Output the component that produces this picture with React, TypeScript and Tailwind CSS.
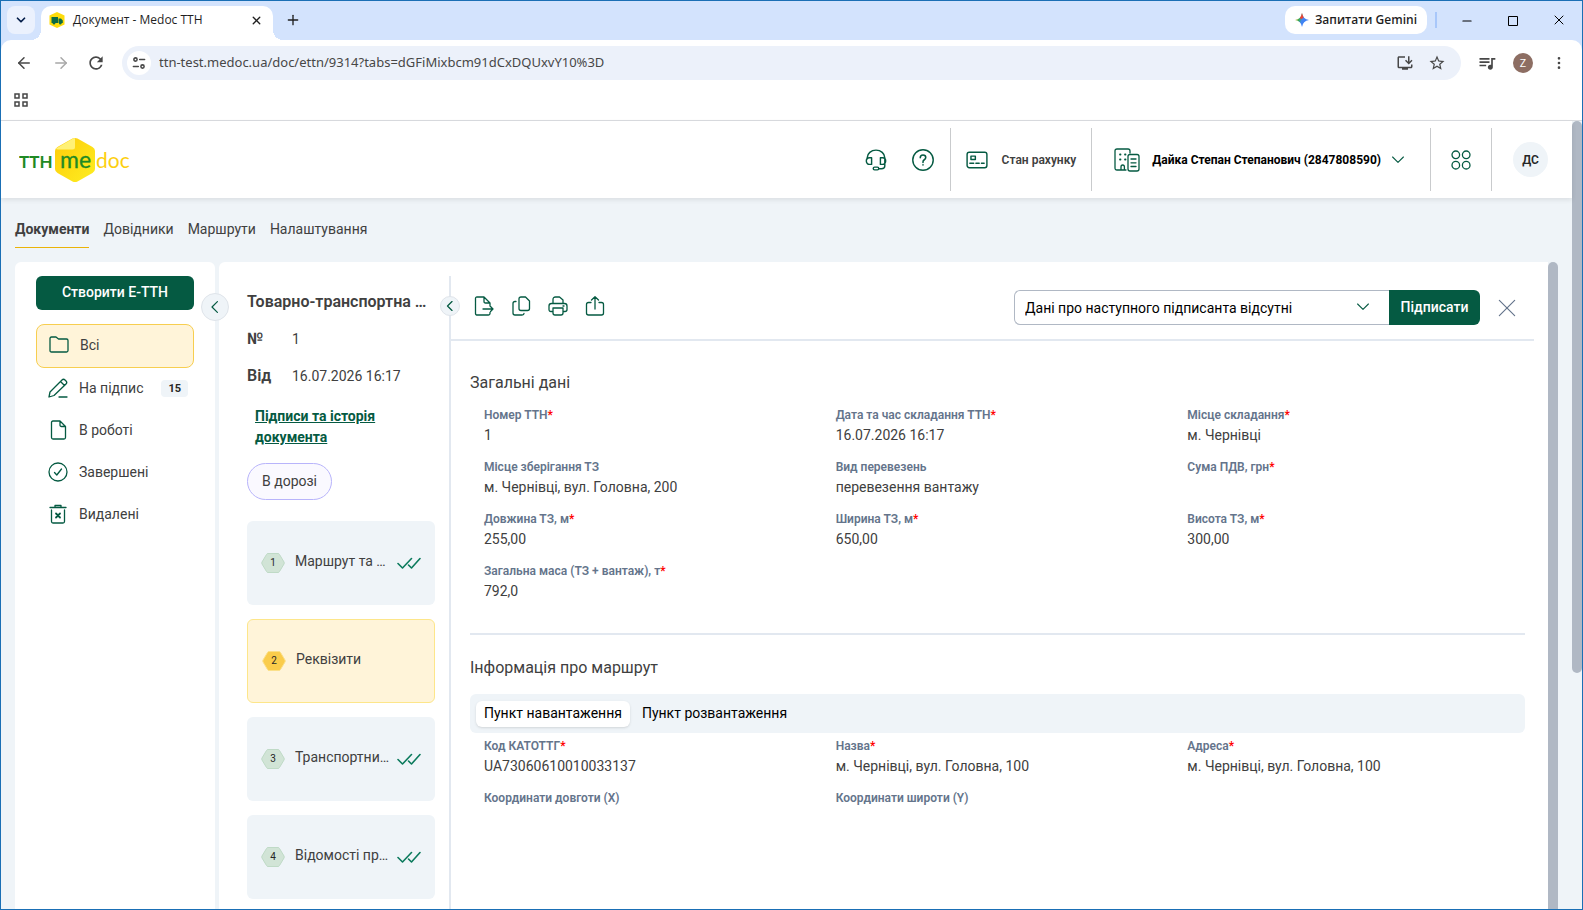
import clsx from "clsx";
import React from "react";
import {
  ArrowLeft,
  ArrowRight,
  ChevronDown,
  EllipsisVertical,
  Minus,
  Plus,
  Square,
  X,
} from "lucide-react";
import {
  MdOutlineInstallDesktop,
  MdQueueMusic,
  MdRefresh,
  MdStarBorder,
} from "react-icons/md";

type IconProps = { children: React.ReactNode; className?: string };

function Icon({ children, className = "size-5" }: IconProps) {
  return (
    <svg
      viewBox="0 0 20 20"
      fill="none"
      stroke="currentColor"
      strokeWidth="1.3"
      strokeLinecap="round"
      strokeLinejoin="round"
      aria-hidden="true"
      className={clsx("shrink-0", className)}
    >
      {children}
    </svg>
  );
}

function Favicon() {
  return (
    <svg viewBox="0 0 16 16" className="size-4 shrink-0" aria-hidden="true">
      <path d="M8 0l7.5 3.5v9L8 16 .5 12.500v-9z" fill="#fddc0c" />
      <path d="M2.500 5h6.500v6H2.500z" fill="#0b6b45" />
      <path d="M9.500 6.500H12l1.800 2V11H9.500z" fill="#0b6b45" />
      <circle cx="5" cy="11.300" r="1.200" fill="#0b6b45" />
      <circle cx="11.300" cy="11.300" r="1.200" fill="#0b6b45" />
    </svg>
  );
}

function Logo() {
  return (
    <svg viewBox="0 0 112 46" className="h-[46px] w-[112px]" role="img" aria-label="ТТН medoc">
      <defs>
        <linearGradient id="logo-hex" x1="0" y1="0" x2="1" y2="1">
          <stop offset="0" stopColor="#fecb0a" />
          <stop offset="1" stopColor="#fdee21" />
        </linearGradient>
      </defs>
      <path
        d="M53.500 1.500q2.500-1.200 5 0l15 8.500q2.500 1.500 2.500 4v18q0 2.500-2.500 4l-15 8.500q-2.500 1.200-5 0l-15-8.500q-2.500-1.500-2.500-4V14q0-2.500 2.500-4z"
        fill="url(#logo-hex)"
      />
      <path d="M37 11.500l17.500-10.300H56V10q0 2.500-2.500 2.500H39q-2 0-2-1z" fill="#fff176" />
      <text x="0" y="31" fontSize="17" fontWeight="700" fill="#1f8a24" className="font-['Lato',sans-serif]">
        ТТН
      </text>
      <text x="41" y="31" fontSize="23" fill="#1f8a24" stroke="#1f8a24" strokeWidth="0.3" className="font-['Lato',sans-serif]">
        me
      </text>
      <text x="77" y="31" fontSize="21" fill="#fdcf10" className="font-['Lato',sans-serif]">
        doc
      </text>
    </svg>
  );
}

function BrowserBar() {
  return (
    <div className="shrink-0 bg-[#d3e3fd] font-['Open_Sans',sans-serif] text-[#1f1f1f]">
      <div className="flex h-[39px] items-end pl-1.5">
        <button
          aria-label="Пошук вкладок"
          className="mb-1.5 flex size-7 items-center justify-center rounded-lg bg-[#ebf1fd] text-[#041e49]"
        >
          <ChevronDown size={14} strokeWidth={3} />
        </button>
        <div className="relative ml-1.5 flex h-[34px] w-[232px] items-start rounded-t-[10px] bg-white pr-2.5 pl-2 text-xs before:absolute before:bottom-0 before:-left-2.5 before:size-2.5 before:bg-[radial-gradient(circle_at_0_0,transparent_10px,white_10px)] after:absolute after:-right-2.5 after:bottom-0 after:size-2.5 after:bg-[radial-gradient(circle_at_100%_0,transparent_10px,white_10px)]">
          <div className="flex h-7 w-full items-center">
            <Favicon />
            <span className="ml-2 flex-1">Документ - Medoc ТТН</span>
            <button aria-label="Закрити вкладку">
              <X size={13} strokeWidth={2.5} />
            </button>
          </div>
        </div>
        <button aria-label="Нова вкладка" className="mb-3 ml-3">
          <Plus size={16} />
        </button>
        <div className="flex-1" />
        <button className="mb-1.5 flex h-7 w-[142px] items-center justify-center gap-1.5 rounded-[10px] bg-white text-xs font-semibold">
          <svg viewBox="0 0 16 16" className="size-3.5" aria-hidden="true">
            <defs>
              <linearGradient id="gemini" x1="0" y1="0.3" x2="1" y2="0.7">
                <stop offset="0" stopColor="#fbbc04" />
                <stop offset="0.3" stopColor="#34a853" />
                <stop offset="0.5" stopColor="#4285f4" />
                <stop offset="1" stopColor="#3b7df5" />
              </linearGradient>
            </defs>
            <path d="M8 0q1 7 8 8-7 1-8 8-1-7-8-8 7-1 8-8z" fill="url(#gemini)" />
            <path d="M8 0q.5 3 2 5L7 7 5.500 5.500Q7.500 3 8 0z" fill="#ea4335" />
          </svg>
          Запитати Gemini
        </button>
        <div className="mb-3 ml-2 h-4 w-0.5 bg-[#a8c7fa]" />
        <button aria-label="Згорнути" className="mb-3 ml-[22px] px-px text-black">
          <Minus size={14} strokeWidth={2} />
        </button>
        <button aria-label="Розгорнути" className="mb-3 ml-[31px] text-black">
          <svg viewBox="0 0 14 14" fill="none" stroke="currentColor" className="size-3.5" aria-hidden="true">
            <path d="M2.500 2.500h9v9h-9z" />
          </svg>
        </button>
        <button aria-label="Закрити" className="mr-[15px] mb-3 ml-[31px] text-black">
          <X size={16} strokeWidth={1.5} />
        </button>
      </div>
      <div className="rounded-t-[10px] border-b border-[#dadce0] bg-white">
        <div className="flex h-[46px] items-center pl-3.5 text-[#474747]">
          <button aria-label="Назад" className="mr-[19px]">
            <ArrowLeft size={18} />
          </button>
          <button aria-label="Вперед" className="mr-4 text-[#a8a8a8]">
            <ArrowRight size={18} />
          </button>
          <button aria-label="Оновити" className="mr-4">
            <MdRefresh size={20} />
          </button>
          <div className="flex h-[34px] flex-1 items-center rounded-full bg-[#ecf1fa] pr-[15px] pl-[5px]">
            <button
              aria-label="Відомості про сайт"
              className="flex size-6 shrink-0 items-center justify-center rounded-full bg-white"
            >
              <Icon className="size-3.5">
                <g strokeWidth="2.2">
                  <circle cx="5" cy="5" r="2.300" />
                  <path d="M11 5h7M2 15h7" />
                  <circle cx="15" cy="15" r="2.300" />
                </g>
              </Icon>
            </button>
            <input
              aria-label="Адреса"
              readOnly
              className="ml-2 min-w-0 flex-1 bg-transparent font-['Noto_Sans',sans-serif] text-[13px] outline-none"
              value="ttn-test.medoc.ua/doc/ettn/9314?tabs=dGFiMixbcm91dCxDQUxvY10%3D"
            />
            <button aria-label="Встановити" className="mr-3.5">
              <MdOutlineInstallDesktop size={18} />
            </button>
            <button aria-label="Додати в закладки">
              <MdStarBorder size={18} />
            </button>
          </div>
          <button aria-label="Медіа" className="ml-4">
            <MdQueueMusic size={20} />
          </button>
          <button
            aria-label="Профіль"
            className="ml-4 flex size-5 items-center justify-center rounded-full bg-[#8d6e63] text-[11px] text-white"
          >
            Z
          </button>
          <button aria-label="Меню" className="mr-[15px] ml-[18px]">
            <EllipsisVertical size={16} />
          </button>
        </div>
        <div className="flex h-[34px] items-center pb-1.5 pl-[13px]">
          <button aria-label="Програми">
            <svg viewBox="0 0 14 14" fill="none" stroke="#474747" strokeWidth="1.500" className="size-3.5">
              <path d="M1 1h4v4H1zM9 1h4v4H9zM1 9h4v4H1zM9 9h4v4H9z" />
            </svg>
          </button>
        </div>
      </div>
    </div>
  );
}

function Header() {
  return (
    <header className="relative flex h-[77px] shrink-0 items-center bg-white pl-[18px] shadow-[0_2px_5px_rgba(0,0,0,0.09)]">
      <Logo />
      <div className="flex-1" />
      <button aria-label="Підтримка" className="mr-[25px] text-[#055a42]">
        <Icon className="size-[22px]">
          <path d="M2 9V8a8 7 0 0 1 16 0v1M4 8h2v6H4a2.800 3 0 0 1 0-6zM16 8h-2v6h2a2.800 3 0 0 0 0-6zM18 9v6.500q0 2.500-3 2.500h-2" />
          <rect x="7.500" y="16.500" width="5" height="2.500" rx="1.200" />
        </Icon>
      </button>
      <button aria-label="Довідка" className="mr-4 text-[#055a42]">
        <Icon className="size-[22px]">
          <circle cx="10" cy="10" r="9.300" />
          <path d="M7.500 8q0-2.500 2.500-2.500T12.500 7.800q0 1.200-1.300 2T10 11.700v.5M10 14.300v.3" strokeWidth="1.400" />
        </Icon>
      </button>
      <button className="flex h-[63px] items-center gap-3.5 border-l border-[#c9cbcd] px-[15px] text-xs font-semibold text-[#404040]">
        <Icon className="size-[22px] text-[#055a42]">
          <rect x="1" y="3" width="18" height="14" rx="2" />
          <path d="M4.500 6.500h4v3h-4zM3.500 13h3.500M9 13h3M14 13h2.500" />
        </Icon>
        Стан рахунку
      </button>
      <button className="flex h-[63px] items-center border-l border-[#c9cbcd] pr-[26px] pl-[22px] text-xs font-bold text-black">
        <svg
          viewBox="0 0 26 24"
          fill="none"
          stroke="#055a42"
          strokeWidth="1.300"
          strokeLinecap="round"
          strokeLinejoin="round"
          aria-hidden="true"
          className="mr-3 h-6 w-[26px]"
        >
          <path d="M12 22H3q-2 0-2-2V3q0-2 2-2h11q2 0 2 2v2M7 22v-3q0-2 1.700-2t1.700 2v3" />
          <path d="M6 6.500h.5M11 6.500h.5M6 11.500h.5M11 11.500h.5" strokeWidth="1.800" />
          <rect x="14" y="6.500" width="11" height="16.500" rx="2" />
          <path d="M17 11h5M17 14.800h5M17 18.500h5" />
        </svg>
        Дайка Степан Степанович (2847808590)
        <Icon className="ml-[11px] size-3 text-[#055a42]">
          <path d="M1 5l9 9 9-9" strokeWidth="1.800" />
        </Icon>
      </button>
      <div className="flex h-[63px] items-center border-x border-[#c9cbcd] px-5">
        <button aria-label="Сервіси" className="text-[#055a42]">
          <Icon>
            <circle cx="4.800" cy="4.800" r="3.800" />
            <circle cx="15.200" cy="4.800" r="3.800" />
            <circle cx="4.800" cy="15.200" r="3.800" />
            <circle cx="15.200" cy="15.200" r="3.800" />
          </Icon>
        </button>
      </div>
      <button className="mr-6 ml-[21px] flex size-[35px] items-center justify-center rounded-full bg-[#eff4f8] text-xs font-semibold text-[#262626]">
        ДС
      </button>
    </header>
  );
}

const sections = ["Документи", "Довідники", "Маршрути", "Налаштування"];

function Nav() {
  return (
    <nav className="flex h-16 shrink-0 gap-3.5 pt-[15px] pl-3.5 text-sm text-[#404040]">
      {sections.map((name, i) => (
        <a
          key={name}
          href="#"
          className={clsx("h-[35px] pt-1.5 leading-5", i === 0 && "border-b border-[#eab308] font-bold")}
        >
          {name}
        </a>
      ))}
    </nav>
  );
}

const folders = [
  {
    name: "На підпис",
    count: 15,
    icon: (
      <path d="M1 19l1-5L14 2q1.500-1.500 3 0l1 1q1.500 1.500 0 3L6 17.500zM12.500 3.500l4 4M11 19h8" />
    ),
  },
  {
    name: "В роботі",
    icon: <path d="M12 1H5Q3.500 1 3.500 2.500v15Q3.500 19 5 19h11q1.500 0 1.500-1.500V6.500zv4q0 1.500 1.500 1.500h4" />,
  },
  {
    name: "Завершені",
    icon: (
      <>
        <circle cx="10" cy="10" r="9" />
        <path d="M6.500 10.500l2.300 2.500 4.700-6" />
      </>
    ),
  },
  {
    name: "Видалені",
    icon: (
      <>
        <path d="M3.500 6v11.500Q3.500 19 5 19h10q1.500 0 1.500-1.500V6M2 3.500h16M7 3.500V1.500h6v2" />
        <path d="M8 9.500l4 4M12 9.500l-4 4" strokeWidth="1.800" />
      </>
    ),
  },
];

function Sidebar() {
  return (
    <aside className="relative w-[200px] shrink-0 rounded-t-md bg-white px-[21px] pt-3.5">
      <button className="h-[34px] w-full rounded-md bg-[#055a42] pb-0.5 text-sm font-medium text-white">
        Створити Е-ТТН
      </button>
      <a
        href="#"
        className="mt-3.5 flex h-11 items-center gap-[11px] rounded-lg border border-[#f7ce50] bg-[#fff4d9] px-3 pb-0.5 text-sm text-[#404040]"
      >
        <Icon className="size-5 text-[#055a42]">
          <path d="M1 3.500Q1 2 2.500 2h4.500l2.500 2h8Q19 4 19 5.500v10q0 1.500-1.500 1.500h-15Q1 17 1 15.500z" />
        </Icon>
        Всі
      </a>
      {folders.map((folder) => (
        <a
          key={folder.name}
          href="#"
          className="flex h-[42px] items-center gap-[11px] pb-0.5 pl-3 text-sm text-[#404040]"
        >
          <Icon className="size-5 text-[#055a42]">{folder.icon}</Icon>
          {folder.name}
          {folder.count && (
            <span className="mr-1.5 ml-auto rounded-sm bg-[#eff4f8] px-[7px] text-[11px] leading-[17px] font-bold text-[#262626]">
              {folder.count}
            </span>
          )}
        </a>
      ))}
      <button
        aria-label="Згорнути меню"
        className="absolute top-[31px] -right-3.5 z-10 flex size-7 items-center justify-center rounded-full border border-[#dfe4ea] bg-[#eff4f8] text-[#055a42]"
      >
        <Icon className="size-3">
          <path d="M14 1L5 10l9 9" strokeWidth="2" />
        </Icon>
      </button>
    </aside>
  );
}

const steps = ["Маршрут та …", "Реквізити", "Транспортни…", "Відомості пр…"];

function StepCard({ index, name }: { index: number; name: string }) {
  const active = index === 1;
  return (
    <button
      className={clsx(
        "flex h-[84px] w-full shrink-0 items-center rounded-md px-3.5 text-left text-sm text-[#404040]",
        active ? "border border-[#fde68a] bg-[#fff4d9]" : "bg-[#eff4f8]"
      )}
    >
      <span className="relative mr-2.5 flex h-5 w-6 shrink-0 items-center justify-center text-[10px] text-[#262626]">
        <svg viewBox="0 0 24 20" className="absolute inset-0 h-5 w-6" aria-hidden="true">
          <path
            d="M7 .5h10q1 0 1.500 1l4.500 7.500q.5 1 0 2l-4.500 7.500q-.5 1-1.500 1H7q-1 0-1.500-1L1 11q-.5-1 0-2l4.500-7.500q.5-1 1.500-1z"
            fill={active ? "#facc4b" : "#d1e4d6"}
            stroke={active ? "#fbe08a" : "#bfdac6"}
          />
        </svg>
        <span className="relative">{index + 1}</span>
      </span>
      <span className="flex-1 pb-1 leading-5 whitespace-nowrap">{name}</span>
      {!active && (
        <svg
          viewBox="0 0 24 12"
          fill="none"
          stroke="#0b7a5c"
          strokeWidth="1.600"
          strokeLinecap="round"
          strokeLinejoin="round"
          aria-hidden="true"
          className="h-3 w-6 shrink-0"
        >
          <path d="M1 6.500l4.500 4.500L14.500 1.500M11.500 8l3 3L23 1.500" />
        </svg>
      )}
    </button>
  );
}

function DocumentColumn() {
  return (
    <div className="relative flex w-[232px] shrink-0 flex-col border-r-2 border-[#e2e8f0] pr-3.5 pl-7 text-[#404040]">
      <h1 className="mt-3.5 text-base leading-6 font-semibold whitespace-nowrap">Товарно-транспортна …</h1>
      <dl className="mt-[13px] grid grid-cols-[45px_1fr] gap-y-[13px] leading-6">
        <dt className="text-base font-semibold">№</dt>
        <dd className="text-sm leading-6">1</dd>
        <dt className="text-base font-semibold">Від</dt>
        <dd className="text-sm leading-6">16.07.2026 16:17</dd>
      </dl>
      <a href="#" className="mt-[18px] px-2 text-sm leading-[21px] font-bold text-[#055a42] underline">
        Підписи та історія документа
      </a>
      <span className="mt-[15px] mb-[21px] flex h-[37px] items-center self-start rounded-full border border-[#b8b4fb] bg-[#faf9ff] px-3.5 pb-0.5 text-sm">
        В дорозі
      </span>
      <div className="flex flex-col gap-3.5">
        {steps.map((name, i) => (
          <StepCard key={name} index={i} name={name} />
        ))}
      </div>
      <button
        aria-label="Згорнути етапи"
        className="absolute top-5 -right-[11px] flex size-5 items-center justify-center rounded-full border border-[#dfe4ea] bg-[#eff4f8] text-[#055a42]"
      >
        <Icon className="size-2.5">
          <path d="M14 1L5 10l9 9" strokeWidth="2.500" />
        </Icon>
      </button>
    </div>
  );
}

function Toolbar() {
  return (
    <div className="mr-3.5 flex h-[65px] items-center border-b-2 border-[#e2e8f0] pr-[18px] pl-[23px]">
      <div className="flex gap-[17px] pb-1 text-[#055a42]">
        <button aria-label="Експорт">
          <Icon>
            <path d="M16 16.500V17.500Q16 19 14.500 19h-11Q1.500 19 1.500 17.500V2.500Q1.500 1 3 1h7l6 6v3M10 1v4.500Q10 7 11.500 7H16M9 13h10M16.500 10.500L19 13l-2.500 2.500" />
          </Icon>
        </button>
        <button aria-label="Копіювати">
          <Icon>
            <path d="M10 1h4.500L18.500 5v7.500q0 2-2 2H10q-2 0-2-2V3q0-2 2-2zM5 5.500H4q-2 0-2 2V17q0 2 2 2h7q2 0 2-1.500" />
          </Icon>
        </button>
        <button aria-label="Друк">
          <Icon>
            <path d="M5 7V3.500Q5 1 7.500 1h4l3.500 3v3M4 15.500H3q-2 0-2-2V10q0-2.500 2.500-2.500h13Q19 7.500 19 10v3.500q0 2-2 2h-1M5 12h10v5q0 2-2 2H7q-2 0-2-2zM15 10h1" />
          </Icon>
        </button>
        <button aria-label="Поділитися">
          <Icon>
            <path d="M6 6.500H3.500Q1.500 6.500 1.500 8.500V17q0 2 2 2h13q2 0 2-2V8.500q0-2-2-2H14M10 13V1M6.500 4L10 .8 13.500 4" />
          </Icon>
        </button>
      </div>
      <div className="flex-1" />
      <div className="relative w-[375px]">
        <select
          aria-label="Наступний підписант"
          className="h-[35px] w-full appearance-none rounded-l-md border border-r-0 border-[#b0b8c4] bg-white px-2.5 text-sm text-black"
        >
          <option>Дані про наступного підписанта відсутні</option>
        </select>
        <Icon className="pointer-events-none absolute top-[11px] right-5 size-3 text-[#055a42]">
          <path d="M1 5l9 9 9-9" strokeWidth="1.800" />
        </Icon>
      </div>
      <button className="h-[35px] w-[91px] rounded-r-md bg-[#055a42] pb-0.5 text-sm font-medium text-white">
        Підписати
      </button>
      <button aria-label="Закрити документ" className="ml-[18px] text-[#64748b]">
        <Icon className="size-[18px]">
          <path d="M1.500 1.500l17 17M18.500 1.500l-17 17" />
        </Icon>
      </button>
    </div>
  );
}

type FieldProps = { label: string; value?: string; required?: boolean };

function Fields({ items }: { items: FieldProps[] }) {
  return (
    <dl className="grid grid-cols-3 gap-y-3">
      {items.map((item) => (
        <div key={item.label} className="px-3.5">
          <dt className="text-xs leading-5 font-semibold text-[#64748b]">
            {item.label}
            {item.required && <span className="text-[#ff0000]">*</span>}
          </dt>
          <dd className="min-h-5 text-sm leading-5 text-[#404040]">{item.value}</dd>
        </div>
      ))}
    </dl>
  );
}

const general: FieldProps[] = [
  { label: "Номер ТТН", value: "1", required: true },
  { label: "Дата та час складання ТТН", value: "16.07.2026 16:17", required: true },
  { label: "Місце складання", value: "м. Чернівці", required: true },
  { label: "Місце зберігання ТЗ", value: "м. Чернівці, вул. Головна, 200" },
  { label: "Вид перевезень", value: "перевезення вантажу" },
  { label: "Сума ПДВ, грн", required: true },
  { label: "Довжина ТЗ, м", value: "255,00", required: true },
  { label: "Ширина ТЗ, м", value: "650,00", required: true },
  { label: "Висота ТЗ, м", value: "300,00", required: true },
  { label: "Загальна маса (ТЗ + вантаж), т", value: "792,0", required: true },
];

const loading: FieldProps[] = [
  { label: "Код КАТОТТГ", value: "UA73060610010033137", required: true },
  { label: "Назва", value: "м. Чернівці, вул. Головна, 100", required: true },
  { label: "Адреса", value: "м. Чернівці, вул. Головна, 100", required: true },
  { label: "Координати довготи (X)" },
  { label: "Координати широти (Y)" },
];

function Details() {
  return (
    <div className="pr-[23px] pl-[19px]">
      <section className="border-b-2 border-[#e2e8f0] pt-[30px] pb-8">
        <h2 className="mb-2.5 text-base leading-6 text-[#404040]">Загальні дані</h2>
        <Fields items={general} />
      </section>
      <section className="pt-[21px]">
        <h2 className="mb-3.5 text-base leading-6 text-[#404040]">Інформація про маршрут</h2>
        <div role="tablist" className="mb-[3px] flex h-[39px] items-center gap-1 rounded-md bg-[#eff4f8] px-1.5 text-sm text-black">
          <button role="tab" aria-selected="true" className="h-[26px] rounded-md bg-white px-2 pb-0.5 shadow-sm">
            Пункт навантаження
          </button>
          <button role="tab" aria-selected="false" className="h-[26px] px-2 pb-0.5">
            Пункт розвантаження
          </button>
        </div>
        <Fields items={loading} />
      </section>
    </div>
  );
}

export default function App() {
  return (
    <div className="flex h-screen flex-col overflow-hidden border border-[#1a6fb5] bg-white">
      <BrowserBar />
      <div className="flex min-h-0 flex-1 bg-[#eff4f8] font-['Roboto',sans-serif]">
        <div className="flex min-w-0 flex-1 flex-col">
          <Header />
          <Nav />
          <div className="flex min-h-0 flex-1 gap-1 overflow-hidden px-3.5">
            <Sidebar />
            <main className="flex min-w-0 flex-1 rounded-tl-md bg-white pt-3.5">
              <DocumentColumn />
              <div className="min-w-0 flex-1">
                <Toolbar />
                <Details />
              </div>
            </main>
            <div className="-ml-1 w-2.5 shrink-0 rounded-t-full bg-[#b0b8c4]" />
          </div>
        </div>
        <div className="w-2.5 shrink-0">
          <div className="h-[70%] rounded-full bg-[#b0b8c4]" />
        </div>
      </div>
    </div>
  );
}
